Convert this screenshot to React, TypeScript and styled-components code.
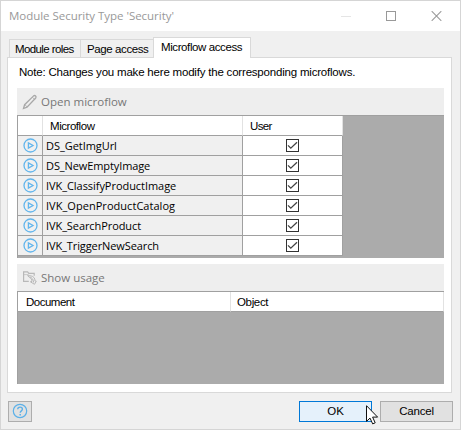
import React from "react";
import styled, { createGlobalStyle } from "styled-components";

const Global = createGlobalStyle`
  * { box-sizing: border-box; }
  body { margin: 0; background: #f0f0f0; }
`;

const Window = styled.div`
  position: relative;
  display: flex;
  flex-direction: column;
  width: 461px;
  height: 430px;
  border: 1px solid #d5d5d5;
  background: #f0f0f0;
  overflow: hidden;
`;

const TitleBar = styled.header`
  display: flex;
  align-items: center;
  height: 30px;
  padding: 0 18px 0 8px;
  background: #fff;
`;

const Label = styled.span<{ $spacing?: number }>`
  font: 11.5px/16px "Liberation Sans", Arial, sans-serif;
  letter-spacing: ${(p) => p.$spacing ?? 0}px;
  white-space: nowrap;
  color: #000;
`;

const Humanist = styled(Label)<{ $size?: number; $color?: string }>`
  font: ${(p) => p.$size ?? 11}px/16px "Open Sans", "Noto Sans", sans-serif;
  color: ${(p) => p.$color ?? "#000"};
`;

const WindowControls = styled.div`
  display: flex;
  align-items: center;
  gap: 35px;
  height: 30px;
  margin-left: auto;
  svg { display: block; }
`;

const TabStrip = styled.nav`
  display: flex;
  align-items: flex-end;
  height: 27px;
  margin-top: -1px;
  padding-left: 8px;
`;

const Tab = styled.div<{ $width: number; $active?: boolean; $inset: number }>`
  display: flex;
  align-items: center;
  position: relative;
  z-index: ${(p) => (p.$active ? 1 : 0)};
  width: ${(p) => p.$width}px;
  height: ${(p) => (p.$active ? 21 : 18)}px;
  margin-bottom: ${(p) => (p.$active ? -1 : 0)}px;
  padding: ${(p) => (p.$active ? "0 0 3px" : "1px 0 0")};
  padding-left: ${(p) => p.$inset}px;
  border: solid #d9d9d9;
  border-width: ${(p) => (p.$active ? "1px 1px 0 1px" : "1px 0 0 1px")};
  background: ${(p) => (p.$active ? "#fff" : "#f0f0f0")};
`;

const Panel = styled.main`
  display: flex;
  flex-direction: column;
  width: 445px;
  height: 336px;
  margin-left: 6px;
  padding: 6px 7px 0 9px;
  border: 1px solid #d9d9d9;
  background: #fff;
`;

const Note = styled.div`
  display: flex;
  height: 24px;
  padding-left: 2px;
`;

const Toolbar = styled.div<{ $spaced?: boolean }>`
  display: flex;
  align-items: center;
  gap: 2px;
  width: 427px;
  height: 27px;
  margin-top: ${(p) => (p.$spaced ? 6 : 0)}px;
  padding-left: 5px;
  background: #eee;
  svg { display: block; flex: none; }
`;

const GridArea = styled.section<{ $height: number }>`
  width: 427px;
  height: ${(p) => p.$height}px;
  background: #ababab;
  border-top: 1px solid #a0a0a0;
  border-left: 1px solid #a0a0a0;
`;

const TableRow = styled.div<{ $header?: boolean }>`
  display: grid;
  grid-template-columns: 25px 200px 100px;
  width: 325px;
  height: 20px;
  background: ${(p) => (p.$header ? "#fff" : "#f0f0f0")};
`;

const Cell = styled.div<{ $inset?: number; $white?: boolean; $center?: boolean; $header?: boolean }>`
  display: flex;
  align-items: center;
  justify-content: ${(p) => (p.$center ? "center" : "flex-start")};
  padding-left: ${(p) => p.$inset ?? 0}px;
  border-bottom: 1px solid #a0a0a0;
  border-right: 1px solid ${(p) => (p.$header ? "#e2e2e2" : "#a0a0a0")};
  background: ${(p) => (p.$white ? "#fff" : "transparent")};
  svg { display: block; }
`;

const UsageHeader = styled.div`
  display: grid;
  grid-template-columns: 213px 213px;
  height: 20px;
  background: #fff;
`;

const Footer = styled.footer`
  display: flex;
  gap: 8px;
  height: 21px;
  margin: 8px 7px 0 7px;
`;

const Button = styled.button<{ $width: number; $primary?: boolean; $push?: boolean }>`
  display: flex;
  align-items: center;
  justify-content: center;
  width: ${(p) => p.$width}px;
  height: 21px;
  padding: 0 0 1px;
  margin-left: ${(p) => (p.$push ? "auto" : "0")};
  border: 1px solid ${(p) => (p.$primary ? "#0078d7" : "#adadad")};
  background: ${(p) => (p.$primary ? "#e5f1fb" : "#e1e1e1")};
  svg { display: block; }
`;

const Cursor = styled.svg`
  position: absolute;
  left: 365px;
  top: 404px;
`;

const PlayIcon = () => (
  <svg width="15" height="15" viewBox="0 0 15 15" fill="none" stroke="#62b5ec">
    <circle cx="7.5" cy="7.5" r="6.5" strokeWidth="1.3" />
    <path d="M5.4 4.9v5.2L10 7.5z" strokeWidth="1.3" />
  </svg>
);

const CheckBox = () => (
  <svg width="13" height="13" viewBox="0 0 13 13" fill="none">
    <rect x=".5" y=".5" width="12" height="12" fill="#fff" stroke="#333" />
    <path d="M2 6.4l2.8 2.8L11 3.2" stroke="#444" strokeWidth="1.3" />
  </svg>
);

const PencilIcon = () => (
  <svg width="17" height="16" viewBox="0 0 17 16" fill="none" stroke="#a8a8a8" strokeWidth="1.3">
    <path d="M1.5 14.5l1.1-3.8L11.6 1.9q1.1-.8 2 .1t.1 2L5 13.2z" />
    <path d="M10.4 3.2l2.4 2.4M2.7 10.5l2.5 2.5" strokeWidth=".8" />
  </svg>
);

const UsageIcon = () => (
  <svg width="17" height="16" viewBox="0 0 17 16" fill="none" stroke="#b8b8b8" strokeWidth="1.2">
    <path d="M6.8 11.4H1.6V1.8h4l1.2 1.5h5.4v2.4" />
    <path d="M2 4.6h4.2l1-1.2" strokeWidth=".7" />
    <path d="M5.6 5.6l3.4.3c2.7.5 4 2.3 4 5.1l1.3.2-1.8 3.1-4.1-2.5 1.6-.4c0-2-.9-3.2-2.6-3.9z" strokeWidth="1" />
    <path d="M7.6 6.9c2.6.7 3.8 2.5 4.1 5.6" strokeWidth="1" />
  </svg>
);

const HelpIcon = () => (
  <svg width="16" height="16" viewBox="0 0 16 16" fill="none" stroke="#5bb0e8">
    <circle cx="8" cy="8" r="6.7" strokeWidth="1.2" />
    <path d="M5.7 6.3c0-3 4.7-2.9 4.7-.1 0 1.7-2.2 1.6-2.2 3.6" strokeWidth="1.4" />
    <path d="M8.2 10.9v1.5" strokeWidth="1.5" />
  </svg>
);

const microflows = [
  { name: "DS_GetImgUrl", spacing: -0.05 },
  { name: "DS_NewEmptyImage", spacing: -0.1 },
  { name: "IVK_ClassifyProductImage", spacing: -0.05 },
  { name: "IVK_OpenProductCatalog", spacing: 0.04 },
  { name: "IVK_SearchProduct", spacing: -0.08 },
  { name: "IVK_TriggerNewSearch", spacing: -0.1 },
];

export default function App() {
  return (
    <>
      <Global />
      <Window>
        <TitleBar>
          <Humanist $size={11.5} $spacing={-0.03} $color="#999">Module Security Type 'Security'</Humanist>
          <WindowControls>
            <svg width="10" height="10" viewBox="0 0 10 10"><path d="M0 5.5h10" stroke="#e5e5e5" /></svg>
            <svg width="10" height="10" viewBox="0 0 10 10"><rect x=".5" y=".5" width="9" height="9" fill="none" stroke="#999" /></svg>
            <svg width="11" height="10" viewBox="0 0 11 10"><path d="M.7.2l9.6 9.6M10.3.2L.7 9.8" stroke="#999" strokeWidth="1.1" /></svg>
          </WindowControls>
        </TitleBar>
        <TabStrip>
          <Tab $width={71} $inset={5}><Label $spacing={-0.6}>Module roles</Label></Tab>
          <Tab $width={73} $inset={6}><Label $spacing={-0.4}>Page access</Label></Tab>
          <Tab $width={98} $inset={7} $active><Label $spacing={-0.4}>Microflow access</Label></Tab>
        </TabStrip>
        <Panel>
          <Note>
            <Label $spacing={-0.2}>Note: Changes you make here modify the corresponding microflows.</Label>
          </Note>
          <Toolbar>
            <PencilIcon />
            <Humanist $size={11.5} $color="#777">Open microflow</Humanist>
          </Toolbar>
          <GridArea $height={143}>
            <TableRow $header>
              <Cell $header />
              <Cell $header $inset={7}><Label $spacing={-0.45}>Microflow</Label></Cell>
              <Cell $header $inset={7}><Label $spacing={-0.65}>User</Label></Cell>
            </TableRow>
            {microflows.map((flow) => (
              <TableRow key={flow.name}>
                <Cell $center><PlayIcon /></Cell>
                <Cell $inset={3}><Humanist $spacing={flow.spacing}>{flow.name}</Humanist></Cell>
                <Cell $center $white><CheckBox /></Cell>
              </TableRow>
            ))}
          </GridArea>
          <Toolbar $spaced>
            <UsageIcon />
            <Humanist $size={11.5} $color="#777">Show usage</Humanist>
          </Toolbar>
          <GridArea $height={93}>
            <UsageHeader>
              <Cell $header $inset={8}><Label $spacing={-0.5}>Document</Label></Cell>
              <Cell $header $inset={6}><Label $spacing={-0.35}>Object</Label></Cell>
            </UsageHeader>
          </GridArea>
        </Panel>
        <Footer>
          <Button $width={24} aria-label="Help"><HelpIcon /></Button>
          <Button $width={73} $primary $push><Label>OK</Label></Button>
          <Button $width={73}><Label $spacing={-0.2}>Cancel</Label></Button>
        </Footer>
        <Cursor width="13" height="20" viewBox="0 0 13 20">
          <path d="M.5.7v15.7l3.5-3.3 2.7 5.8 2.5-1.1-2.6-5.7h5z" fill="#fff" stroke="#111" />
        </Cursor>
      </Window>
    </>
  );
}
